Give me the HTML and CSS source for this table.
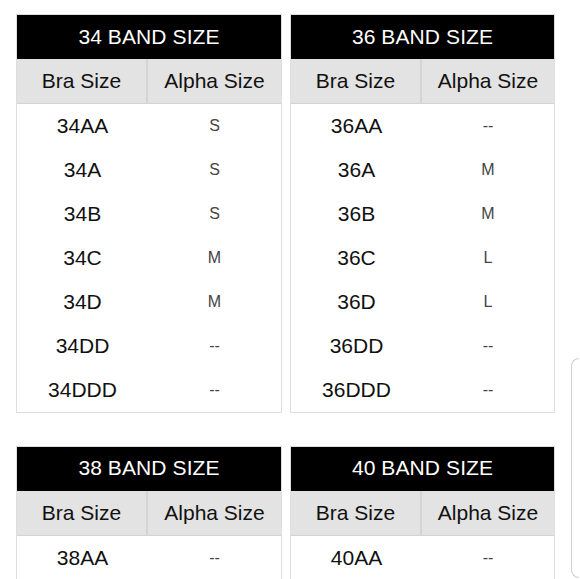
FILE: index.html
```html
<!DOCTYPE html>
<html>
<head>
<meta charset="utf-8">
<link rel="stylesheet" href="styles.css">
</head>
<body>
<div class="charts">
  <div class="chart">
    <div class="band">34 BAND SIZE</div>
    <div class="head"><div>Bra Size</div><div>Alpha Size</div></div>
    <div class="row"><div class="bra">34AA</div><div class="alpha">S</div></div>
    <div class="row"><div class="bra">34A</div><div class="alpha">S</div></div>
    <div class="row"><div class="bra">34B</div><div class="alpha">S</div></div>
    <div class="row"><div class="bra">34C</div><div class="alpha">M</div></div>
    <div class="row"><div class="bra">34D</div><div class="alpha">M</div></div>
    <div class="row"><div class="bra">34DD</div><div class="alpha">--</div></div>
    <div class="row"><div class="bra">34DDD</div><div class="alpha">--</div></div>
  </div>
  <div class="chart">
    <div class="band">36 BAND SIZE</div>
    <div class="head"><div>Bra Size</div><div>Alpha Size</div></div>
    <div class="row"><div class="bra">36AA</div><div class="alpha">--</div></div>
    <div class="row"><div class="bra">36A</div><div class="alpha">M</div></div>
    <div class="row"><div class="bra">36B</div><div class="alpha">M</div></div>
    <div class="row"><div class="bra">36C</div><div class="alpha">L</div></div>
    <div class="row"><div class="bra">36D</div><div class="alpha">L</div></div>
    <div class="row"><div class="bra">36DD</div><div class="alpha">--</div></div>
    <div class="row"><div class="bra">36DDD</div><div class="alpha">--</div></div>
  </div>
  <div class="chart chart-cut">
    <div class="band">38 BAND SIZE</div>
    <div class="head"><div>Bra Size</div><div>Alpha Size</div></div>
    <div class="row"><div class="bra">38AA</div><div class="alpha">--</div></div>
  </div>
  <div class="chart chart-cut">
    <div class="band">40 BAND SIZE</div>
    <div class="head"><div>Bra Size</div><div>Alpha Size</div></div>
    <div class="row"><div class="bra">40AA</div><div class="alpha">--</div></div>
  </div>
</div>
<div class="side-card"></div>
</body>
</html>
```
FILE: styles.css
```css
html, body {
  margin: 0;
  padding: 0;
  background: #fff;
}
body {
  font-family: "Liberation Sans", Arial, sans-serif;
  color: #111;
  position: relative;
  width: 580px;
  height: 579px;
  overflow: hidden;
}
.charts {
  display: grid;
  grid-template-columns: 266px 265px;
  column-gap: 8px;
  row-gap: 33px;
  padding: 14px 0 0 16px;
}
.chart {
  border: 1px solid #dedede;
  align-self: start;
}
.chart-cut {
  border-bottom: none;
}
.band {
  background: #000;
  color: #fff;
  height: 44px;
  display: flex;
  align-items: center;
  justify-content: center;
  font-size: 21px;
  letter-spacing: 0.1px;
  padding-bottom: 1px;
  box-sizing: border-box;
}
.head {
  display: grid;
  grid-template-columns: 131px 1fr;
  background: #e3e3e3;
  height: 45px;
  border-bottom: 1px solid #d2d2d2;
  box-sizing: border-box;
}
.head > div {
  display: flex;
  align-items: center;
  justify-content: center;
  font-size: 21px;
  color: #111;
}
.head > div:first-child {
  border-right: 2px solid #d4d4d4;
}
.row {
  display: grid;
  grid-template-columns: 131px 1fr;
  height: 43.95px;
}
.row > div {
  display: flex;
  align-items: center;
  justify-content: center;
  padding-top: 1px;
}
.bra {
  font-size: 21px;
  color: #111;
}
.alpha {
  font-size: 16px;
  color: #444;
}
.side-card {
  position: absolute;
  left: 571px;
  top: 358px;
  width: 7px;
  height: 218px;
  border: 1.5px solid #cfcfcf;
  border-right: none;
  border-radius: 9px 0 0 9px;
}
```
